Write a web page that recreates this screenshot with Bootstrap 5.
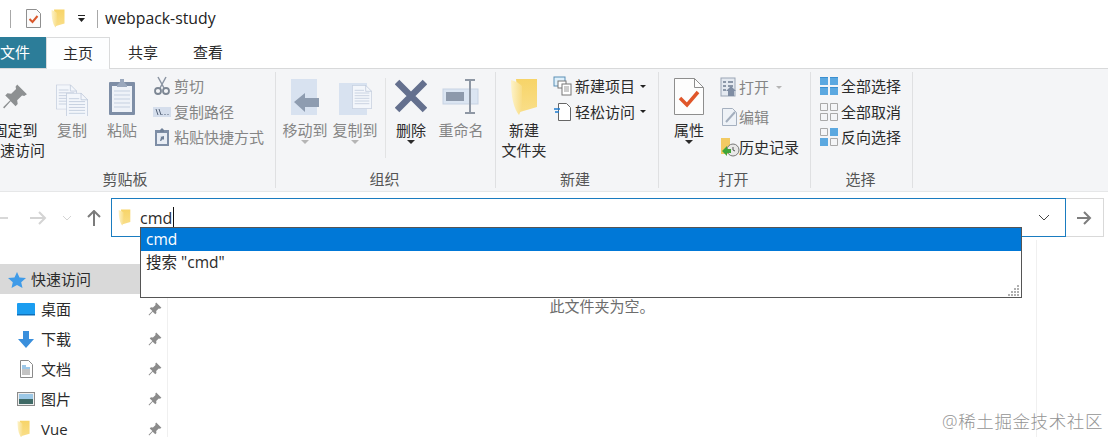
<!DOCTYPE html>
<html lang="zh-CN">
<head>
  <meta charset="UTF-8" />
  <title>webpack-study</title>
  <link href="https://cdn.jsdelivr.net/npm/bootstrap@5.3.3/dist/css/bootstrap.min.css" rel="stylesheet">
  <style>
    html, body { height: 100%; overflow: hidden; background: #fff; }
    body { font-family: "Open Sans", "Noto Sans CJK SC", sans-serif; font-size: 15px; color: #2b2b2b; position: relative; }

    .title-row { height: 37px; }
    .title-sep { width: 1px; height: 18px; background: #a8a8a8; }
    .title-text { font-size: 15.800px; margin-left: 7px; color: #222; }

    .tab-row { height: 31px; }
    .tab-file { width: 46px; background: #2c7d99; color: #fff; line-height: 31px; text-align: right; padding-right: 20px; white-space: nowrap; }
    .tab-cur { width: 64px; height: 32px; margin-bottom: -1px; line-height: 30px; text-align: center; background: #fdfeff; border: 1px solid #dadbdc; border-bottom: 0; position: relative; z-index: 1; }
    .tab-plain { width: 64px; text-align: center; line-height: 31px; margin-left: 1px; }

    .rb { height: 124px; background: #f4f5f7; border-top: 1px solid #d8d9da; border-bottom: 1px solid #e6e7e8; }
    .rb-group { display: flex; flex-direction: column; height: 116px; margin-top: 3px; border-right: 1px solid #dfe0e2; flex: none; }
    .rb-body { display: flex; flex: 1; }
    .rb-label { height: 20px; line-height: 22px; text-align: center; color: #555; }
    .g-clip { width: 291px; margin-left: -15px; }
    .g-org { width: 220px; padding-left: 4px; }
    .g-new { width: 163px; padding-left: 3px; }
    .g-open { width: 152px; padding-left: 5px; }
    .g-sel { width: 102px; padding-left: 8px; }
    .g-clip .rb-label { padding-right: 10px; }
    .g-org .rb-label { margin-left: -4px; padding-right: 2px; }
    .g-new .rb-label { margin-left: -3px; padding-right: 4px; }
    .g-open .rb-label { margin-left: -5px; padding-right: 2px; }
    .g-sel .rb-label { margin-left: -8px; padding-right: 2px; }

    .big-btn { width: 50px; flex: none; display: flex; flex-direction: column; align-items: center; padding-top: 6px; line-height: 20px; text-align: center; white-space: nowrap; position: relative; }
    .big-btn svg { height: 38px; margin-bottom: 3.500px; flex: none; }
    .big-wide { width: 60px; margin-right: 2px; }
    .is-off { color: #858585; }
    .down-mark { width: 0; height: 0; border: 4px solid transparent; border-top-color: #2b2b2b; border-bottom: 0; margin-top: 0; }
    .is-off .down-mark { border-top-color: #b5b5b5; }
    .rb-vline { width: 1px; height: 80px; background: #e2e3e4; margin: 6px 0 0 5px; flex: none; }

    .small-col { display: flex; flex-direction: column; padding-top: 1.500px; flex: none; }
    .small-btn { height: 25.500px; display: flex; align-items: center; white-space: nowrap; }
    .small-btn svg { width: 20px; height: 20px; margin-right: 2px; flex: none; }
    .small-tall { height: 30px; }
    .small-col-open { padding-top: 0; margin-left: 6px; }
    .small-col-open svg { margin-right: -1px; }
    .small-mark { width: 0; height: 0; border: 3.500px solid transparent; border-top-color: #222; border-bottom: 0; margin-left: 5px; }
    .is-off .small-mark { border-top-color: #b5b5b5; }

    .addr-row { height: 48px; padding-top: 3px; }
    .addr-nav { width: 111px; flex: none; }
    .addr-box { width: 955px; height: 39px; border: 1px solid #1a7cc0; font-size: 16px; padding: 0 15px 0 6px; }
    .addr-caret { width: 1px; height: 21px; background: #111; margin-left: 1px; }
    .addr-go { width: 38px; height: 39px; border: 1px solid #d9d9d9; border-left: 0; }

    .side-pane { width: 168px; flex: none; border-right: 1px solid #f0f0f0; padding-top: 24px; }
    .side-item { height: 30px; padding-left: 17px; white-space: nowrap; }
    .side-item > span { margin-left: 6px; flex: 1; }
    .side-cur { background: #d9d9d9; padding-left: 8px; }
    .side-cur > span { margin-left: 5px; }
    .side-pin { width: 14px; height: 14px; margin-right: 5px; flex: none; color: #8b8b8b; }
    .main-pane { width: 869px; flex: none; border-right: 1px solid #f0f0f0; padding-top: 55px; text-align: center; color: #6d6d6d; }

    .suggest { position: absolute; left: 140px; top: 227px; width: 882px; height: 71px; background: #fff; border: 1px solid #555; font-size: 15.500px; }
    .suggest-on { height: 23px; line-height: 23px; background: #0078d7; color: #fff; padding-left: 5px; }
    .suggest-row { height: 23px; line-height: 22px; padding-left: 5px; }
    .suggest svg { position: absolute; right: 1px; bottom: 1px; }
    .water-mark { position: absolute; right: 5px; top: 408px; font-size: 17.500px; font-weight: 300; color: #949494; white-space: nowrap; letter-spacing: .6px; }
  </style>
</head>
<body>
  <svg width="0" height="0" class="position-absolute">
    <defs>
      <linearGradient id="fold-back" x1="0" y1="0" x2="0" y2="1"><stop offset="0" stop-color="#f7d468"/><stop offset="1" stop-color="#f9de88"/></linearGradient>
      <linearGradient id="fold-front" x1="0" y1="0" x2="1" y2="0"><stop offset="0" stop-color="#fdf3c9"/><stop offset="1" stop-color="#f8dc84"/></linearGradient>
    </defs>
    <symbol id="pin" viewBox="0 0 24 24"><path fill="currentColor" d="M14 1l9 9-2.500 1.500-2-.5-4.500 4.500.5 3.500-2 2-4.500-4.500L2 23l-1-1 6.500-6.500L3 11l2-2 3.500.5L13 5l-.5-2z"/></symbol>
    <symbol id="folder" viewBox="0 0 28 38"><path fill="url(#fold-back)" d="M6 1h21v28L10 34z"/><path fill="url(#fold-front)" d="M1 2c4 1 8 3 11 6v22l-3 7C4 31 1 20 1 2z"/></symbol>
    <symbol id="grid-on" viewBox="0 0 20 20"><path fill="#5ba8e0" d="M1 1h8v8H1zM11 1h8v8h-8zM1 11h8v8H1zM11 11h8v8h-8z"/><path fill="#3a8fd0" d="M1 1h8v1H1zM11 1h8v1h-8zM1 11h8v1H1zM11 11h8v1h-8z"/></symbol>
    <symbol id="grid-off" viewBox="0 0 20 20"><path fill="none" stroke="#a9a9a9" d="M1.500 1.500h7v7h-7zM11.500 1.500h7v7h-7zM1.500 11.500h7v7h-7zM11.500 11.500h7v7h-7z"/></symbol>
    <symbol id="doc-lines" viewBox="0 0 30 36"><path fill="#f3f6fb" stroke="#b7c3d6" d="M.5.500h20l9 9v26H.5z"/><path stroke="#b7c3d6" fill="none" d="M4 8h14M4 12h22M4 16h22M4 20h22M4 24h22M4 28h22M20.500 .5v9h9"/></symbol>
  </svg>

  <div class="title-row d-flex align-items-center">
    <div class="title-sep" style="margin-left:10px"></div>
    <svg style="margin-left:15px" width="15" height="19" viewBox="0 0 15 19"><path fill="#fbfbfb" stroke="#8f8f8f" d="M.5.500h10l4 4v14H.5z"/><path fill="none" stroke="#d9572b" stroke-width="2" d="M3.500 10l3 3 5-6"/></svg>
    <svg style="margin-left:10px" width="14" height="19"><use href="#folder"/></svg>
    <svg style="margin-left:12px" width="10" height="10" viewBox="0 0 10 10"><path fill="#222" d="M1 1h7v1H1zM1 4h7L4.500 8z"/></svg>
    <div class="title-sep" style="margin-left:10px"></div>
    <div class="title-text">webpack-study</div>
  </div>

  <div class="tab-row d-flex">
    <div class="tab-file">文件</div>
    <div class="tab-cur">主页</div>
    <div class="tab-plain">共享</div>
    <div class="tab-plain">查看</div>
  </div>

  <div class="rb d-flex">
    <div class="rb-group g-clip">
      <div class="rb-body">
        <div class="big-btn big-wide">
          <svg width="26" height="38" viewBox="0 -5 24 35" style="color:#8d9092"><use href="#pin" width="24" height="24"/></svg>
          固定到<br>快速访问
        </div>
        <div class="big-btn is-off">
          <svg width="32" height="38" viewBox="0 0 32 38"><svg x="0" y="0" width="21" height="27" viewBox="0 0 30 36"><use href="#doc-lines"/></svg><svg x="10" y="9" width="22" height="28" viewBox="0 0 30 36"><use href="#doc-lines"/></svg></svg>
          复制
        </div>
        <div class="big-btn is-off">
          <svg width="28" height="38" viewBox="0 0 28 38"><rect x="1" y="4" width="26" height="33" rx="1" fill="#7e8ea6"/><rect x="4" y="8" width="20" height="26" fill="#eef2f8"/><path stroke="#c5d0e0" d="M6 13h16M6 17h16M6 21h16M6 25h16M6 29h16"/><path fill="#9aa8bd" d="M9 7l3-3V1h4v3l3 3v2H9z"/></svg>
          粘贴
        </div>
        <div class="small-col is-off" style="margin-left:5px">
          <div class="small-btn"><svg viewBox="0 0 20 20"><path fill="none" stroke="#8b95a3" stroke-width="1.500" d="M6 1l6 11M14 1L8 12"/><circle cx="6" cy="15" r="3" fill="none" stroke="#7d8794" stroke-width="1.800"/><circle cx="14" cy="15" r="3" fill="none" stroke="#7d8794" stroke-width="1.800"/></svg>剪切</div>
          <div class="small-btn"><svg viewBox="0 0 20 20"><rect x="1" y="5" width="18" height="10" fill="#d5deec"/><path stroke="#56647a" fill="none" d="M4 7l2 6M7 7l2 6M10 12v1M13 12v1M16 12v1"/></svg>复制路径</div>
          <div class="small-btn"><svg viewBox="0 0 20 20"><rect x="3" y="3" width="14" height="16" fill="#7e8ea6"/><rect x="5" y="6" width="10" height="11" fill="#e8edf5"/><path fill="#6f8098" d="M8 3l2-2 2 2v2H8zM8 14l1-4h-1l4-1v4l-1-1-2 2z"/></svg>粘贴快捷方式</div>
        </div>
      </div>
      <div class="rb-label">剪贴板</div>
    </div>

    <div class="rb-group g-org">
      <div class="rb-body">
        <div class="big-btn is-off">
          <svg width="30" height="38" viewBox="0 0 30 38"><rect x="1" y="1" width="26" height="36" fill="#d8e2f0"/><path fill="#8e9cb0" d="M4 24l11-9v5h14v9H15v5z"/></svg>
          移动到
          <span class="down-mark"></span>
        </div>
        <div class="big-btn is-off">
          <svg width="34" height="38" viewBox="0 0 34 38"><rect x="1" y="5" width="28" height="32" fill="#d8e2f0"/><svg x="14" y="0" width="20" height="24" viewBox="0 0 30 36"><use href="#doc-lines"/></svg></svg>
          复制到
          <span class="down-mark"></span>
        </div>
        <div class="rb-vline"></div>
        <div class="big-btn">
          <svg width="32" height="38" viewBox="0 0 32 38"><path fill="none" stroke="#64708e" stroke-width="6.500" d="M2 4l28 28M30 4L2 32"/></svg>
          删除
          <span class="down-mark"></span>
        </div>
        <div class="big-btn is-off">
          <svg width="38" height="38" viewBox="0 0 38 38"><rect x="1" y="11" width="35" height="15" fill="#dbe5f2" stroke="#c7d3e4"/><rect x="4" y="14" width="18" height="9" fill="#8d99ab"/><path fill="none" stroke="#8e97a4" stroke-width="2" d="M23 2h10M28 2v33M23 35h10"/></svg>
          重命名
        </div>
      </div>
      <div class="rb-label">组织</div>
    </div>

    <div class="rb-group g-new">
      <div class="rb-body">
        <div class="big-btn">
          <svg width="28" height="38"><use href="#folder"/></svg>
          新建<br>文件夹
        </div>
        <div class="small-col" style="margin-left:4px">
          <div class="small-btn"><svg viewBox="0 0 20 20"><rect x="1" y="1" width="11" height="9" fill="#dff0fb" stroke="#5b8fb5"/><rect x="5" y="5" width="8" height="7" fill="#fff" stroke="#777"/><rect x="9" y="8" width="9" height="11" fill="#fff" stroke="#777"/><path stroke="#999" d="M11 11h5M11 13h5M11 15h5"/></svg>新建项目<span class="small-mark"></span></div>
          <div class="small-btn"><svg viewBox="0 0 20 20"><path fill="#fff" stroke="#666" d="M5.500 1.500h8l4 4v13h-12z"/><path stroke="#1f7ccf" stroke-width="1.300" d="M1 7h6M2 10h4"/></svg>轻松访问<span class="small-mark"></span></div>
        </div>
      </div>
      <div class="rb-label">新建</div>
    </div>

    <div class="rb-group g-open">
      <div class="rb-body">
        <div class="big-btn">
          <svg width="30" height="38" viewBox="0 0 30 38"><path fill="#fdfdfd" stroke="#8e8e8e" d="M.5.500h20l9 9v27H.5z"/><path fill="none" stroke="#8e8e8e" d="M20.500.5v9h9"/><path fill="none" stroke="#e0562a" stroke-width="3.500" d="M6 20l7 7 11-13"/></svg>
          属性
          <span class="down-mark"></span>
        </div>
        <div class="small-col small-col-open is-off">
          <div class="small-btn small-tall"><svg viewBox="0 0 20 20"><rect x="1" y="1" width="14" height="18" fill="#e4e9f0" stroke="#9aa5b5"/><path stroke="#8b97a8" stroke-width="2" d="M3 5h3M8 5h5M3 9h3M8 9h5M3 13h3"/><path fill="#7f8da3" d="M8 19v-5H6l5-5 5 5h-2v5z"/></svg>打开<span class="small-mark" style="margin-left:7px"></span></div>
          <div class="small-btn small-tall"><svg viewBox="0 0 20 20"><path fill="#eef2f7" stroke="#a5b0bf" d="M2.500 1.500h10l4 4v13h-14z"/><path stroke="#a3aebd" stroke-width="2" d="M6 15L15 5"/></svg>编辑</div>
          <div class="small-btn small-tall" style="color:#2b2b2b"><svg viewBox="0 0 20 20"><path fill="#f2ca63" d="M1 1h9v16H1z"/><circle cx="13" cy="13" r="6" fill="#e8e8e8" stroke="#777"/><path fill="#3fa53a" d="M2 14l5-5v3h4v4H7v3z"/><path stroke="#555" fill="none" d="M13 10v3l2 1"/></svg>历史记录</div>
        </div>
      </div>
      <div class="rb-label">打开</div>
    </div>

    <div class="rb-group g-sel">
      <div class="rb-body">
        <div class="small-col">
          <div class="small-btn"><svg width="20" height="20"><use href="#grid-on"/></svg>全部选择</div>
          <div class="small-btn"><svg width="20" height="20"><use href="#grid-off"/></svg>全部取消</div>
          <div class="small-btn"><svg viewBox="0 0 20 20"><path fill="none" stroke="#a9a9a9" d="M1.500 1.500h7v7h-7zM11.500 11.500h7v7h-7z"/><path fill="#5ba8e0" d="M11 1h8v8h-8zM1 11h8v8H1z"/></svg>反向选择</div>
        </div>
      </div>
      <div class="rb-label">选择</div>
    </div>
  </div>

  <div class="addr-row d-flex align-items-center">
    <div class="addr-nav d-flex align-items-center">
      <svg width="9" height="16" viewBox="0 0 9 16"><path stroke="#d8d8d8" stroke-width="2" d="M0 8h8"/></svg>
      <svg style="margin-left:21px" width="17" height="16" viewBox="0 0 17 16"><path fill="none" stroke="#d4d4d4" stroke-width="2" d="M0 8h15M9 2l6 6-6 6"/></svg>
      <svg style="margin-left:15px" width="10" height="6" viewBox="0 0 10 6"><path fill="none" stroke="#d4d4d4" d="M1 1l4 4 4-4"/></svg>
      <svg style="margin-left:15px" width="14" height="16" viewBox="0 0 14 16"><path fill="none" stroke="#7b7b7b" stroke-width="2" d="M7 16V1M1 7l6-6 6 6"/></svg>
    </div>
    <div class="addr-box d-flex align-items-center">
      <svg width="13" height="17"><use href="#folder"/></svg>
      <span style="margin-left:9px">cmd</span><span class="addr-caret"></span>
      <svg class="ms-auto" width="12" height="7" viewBox="0 0 12 7"><path fill="none" stroke="#444" d="M1 1l5 5 5-5"/></svg>
    </div>
    <div class="addr-go d-flex align-items-center justify-content-center">
      <svg width="15" height="14" viewBox="0 0 15 14"><path fill="none" stroke="#7d7d7d" stroke-width="2" d="M0 7h13M7 1l6 6-6 6"/></svg>
    </div>
  </div>

  <div class="d-flex">
    <div class="side-pane">
      <div class="side-item side-cur d-flex align-items-center">
        <svg width="18" height="17" viewBox="0 0 18 17"><path fill="#3f9be8" d="M9 1l2.500 5.500L18 7l-4.800 4.200L14.500 17 9 14l-5.500 3 1.300-5.800L0 7l6.500-.5z"/></svg>
        <span>快速访问</span>
      </div>
      <div class="side-item d-flex align-items-center">
        <svg width="18" height="14" viewBox="0 0 18 14"><rect width="18" height="12" y="1" rx="1" fill="#1b9df0"/><path fill="#0f6fb8" d="M0 12h18v1.500H0z"/></svg>
        <span>桌面</span><svg class="side-pin"><use href="#pin"/></svg>
      </div>
      <div class="side-item d-flex align-items-center">
        <svg width="18" height="17" viewBox="0 0 18 17"><path fill="#3a8fdc" d="M6 0h6v8h5l-8 9-8-9h5z"/></svg>
        <span>下载</span><svg class="side-pin"><use href="#pin"/></svg>
      </div>
      <div class="side-item d-flex align-items-center">
        <svg width="18" height="18" viewBox="0 0 18 18"><path fill="#fff" stroke="#8a8a8a" d="M3.500.5h8l4 4v13h-12z"/><path stroke="#3a8fd0" d="M5 6h4M5 8h8"/><path stroke="#888" d="M5 10h8M5 12h8M5 14h8"/></svg>
        <span>文档</span><svg class="side-pin"><use href="#pin"/></svg>
      </div>
      <div class="side-item d-flex align-items-center">
        <svg width="18" height="14" viewBox="0 0 18 14"><rect x=".5" y=".5" width="17" height="13" fill="#eee" stroke="#8a8a8a"/><rect x="2" y="2" width="14" height="5" fill="#9cc8e6"/><rect x="2" y="7" width="14" height="5" fill="#3f6a66"/></svg>
        <span>图片</span><svg class="side-pin"><use href="#pin"/></svg>
      </div>
      <div class="side-item d-flex align-items-center">
        <svg width="13" height="18" style="margin-right:5px"><use href="#folder"/></svg>
        <span>Vue</span><svg class="side-pin"><use href="#pin"/></svg>
      </div>
    </div>
    <div class="main-pane">此文件夹为空。</div>
  </div>

  <div class="suggest">
    <div class="suggest-on">cmd</div>
    <div class="suggest-row">搜索 "cmd"</div>
    <svg width="12" height="12" viewBox="0 0 12 12"><path fill="#b0b0b0" d="M9 1h2v2H9zM6 4h2v2H6zM9 4h2v2H9zM3 7h2v2H3zM6 7h2v2H6zM9 7h2v2H9zM0 10h2v2H0zM3 10h2v2H3zM6 10h2v2H6zM9 10h2v2H9z"/></svg>
  </div>

  <div class="water-mark">@稀土掘金技术社区</div>

  <script src="https://cdn.jsdelivr.net/npm/bootstrap@5.3.3/dist/js/bootstrap.bundle.min.js"></script>
</body>
</html>
